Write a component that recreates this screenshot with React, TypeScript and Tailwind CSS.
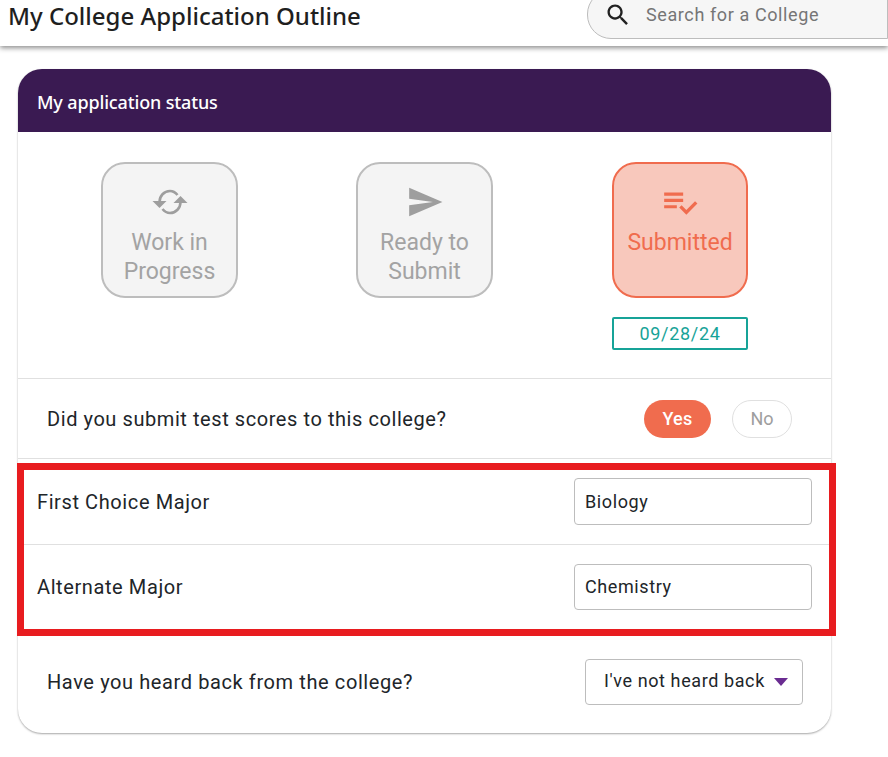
function SyncIcon() {
  return (
    <svg width="36" height="28" viewBox="0 0 36 28" fill="none" className="text-[#9e9e9e]">
      <path d="M7.500 14C7.500 8 12 3 18 3C21 3 23.500 4.500 25.500 7" stroke="currentColor" strokeWidth="2.600" />
      <path d="M28.500 14C28.500 20 24 25 18 25C15 25 12.500 23.500 10.500 21" stroke="currentColor" strokeWidth="2.600" />
      <path d="M0.500 13H14.500L7.500 20Z" fill="currentColor" />
      <path d="M21.500 15H35.500L28.500 8Z" fill="currentColor" />
    </svg>
  );
}

function SendIcon() {
  return (
    <svg width="38" height="38" viewBox="0 0 24 24" fill="#9e9e9e">
      <path d="M2.010 21L23 12 2.010 3 2 10l15 2-15 2z" />
    </svg>
  );
}

function PlaylistCheckIcon() {
  return (
    <svg width="38" height="38" viewBox="0 0 24 24" fill="#f06c4e">
      <path d="M14 10H2v2h12v-2zm0-4H2v2h12V6zM2 16h8v-2H2v2zm19.500-4.500L23 13l-6.990 7-4.510-4.500L13 14l3.010 3 5.490-5.500z" />
    </svg>
  );
}

function SearchIcon() {
  return (
    <svg width="28" height="28" viewBox="0 0 24 24" fill="#212121">
      <path d="M15.500 14h-.79l-.28-.27C15.410 12.590 16 11.110 16 9.500 16 5.910 13.090 3 9.500 3S3 5.910 3 9.500 5.910 16 9.500 16c1.610 0 3.090-.59 4.230-1.570l.27.28v.79l5 4.990L20.490 19l-4.990-5zm-6 0C7.010 14 5 11.990 5 9.500S7.010 5 9.500 5 14 7.010 14 9.500 11.990 14 9.500 14z" />
    </svg>
  );
}

function StatusTile({ icon, lines, active }: { icon: React.ReactNode; lines: string[]; active?: boolean }) {
  return (
    <div
      className={
        active
          ? "flex h-[136px] w-[136px] flex-col items-center rounded-[24px] border-2 border-[#f06c4e] bg-[#f8c8bc] pt-[13px] text-[23px] leading-[29px] text-[#f06c4e]"
          : "flex h-[136px] w-[137px] flex-col items-center rounded-[24px] border-2 border-[#bdbdbd] bg-[#f4f4f4] pt-[13px] text-[23px] leading-[29px] text-[#a3a3a3]"
      }
    >
      <div className="flex h-[50px] items-center justify-center">{icon}</div>
      <div className="mt-[1px] text-center">
        {lines.map((l) => (
          <div key={l}>{l}</div>
        ))}
      </div>
    </div>
  );
}

export default function App() {
  return (
    <div className="relative h-[757px] w-[888px] overflow-hidden bg-white font-['Roboto',sans-serif] text-[#212529]">
      <header className="flex h-[46px] items-start justify-between bg-white shadow-[0_2px_5px_rgba(0,0,0,0.45)]">
        <h1 className="ml-2 mt-0 font-['Noto_Sans',sans-serif] text-[24px] font-medium leading-[32px] text-[#1f1f1f]">
          My College Application Outline
        </h1>
        <div className="mt-[-10px] flex h-[49px] w-[301px] shrink-0 items-center rounded-l-[24px] border border-[#bdbdbd] bg-[#f6f6f6] pl-[16px]">
          <SearchIcon />
          <span className="ml-[14px] text-[18px] tracking-[0.6px] text-[#757575]">Search for a College</span>
        </div>
      </header>

      <main className="ml-[18px] mt-[23px] w-[813px] overflow-hidden rounded-[24px] bg-white shadow-[0_1px_2px_rgba(0,0,0,0.35)]">
        <div className="flex h-[63px] items-center bg-[#3a1a52] pl-[19px] pt-[4px] font-['Noto_Sans',sans-serif] text-[18px] font-medium tracking-[-0.15px] text-white">
          My application status
        </div>

        <section className="flex h-[247px] border-b border-[#e0e0e0] pl-[83px] pt-[30px]">
          <StatusTile icon={<SyncIcon />} lines={["Work in", "Progress"]} />
          <div className="ml-[118px]">
            <StatusTile icon={<SendIcon />} lines={["Ready to", "Submit"]} />
          </div>
          <div className="ml-[119px] flex flex-col">
            <StatusTile icon={<PlaylistCheckIcon />} lines={["Submitted"]} active />
            <div className="mt-[19px] flex h-[33px] w-[136px] items-center justify-center rounded-[2px] border-2 border-[#17a398] text-[18px] tracking-[0.7px] text-[#17a398]">
              09/28/24
            </div>
          </div>
        </section>

        <section className="flex h-[80px] items-center justify-between border-b border-[#e0e0e0] pl-[29px] pr-[39px] text-[20px]">
          <span className="tracking-[0.57px]">Did you submit test scores to this college?</span>
          <div className="flex items-center gap-[21px] text-[18px] font-medium">
            <span className="flex h-[38px] w-[67px] items-center justify-center rounded-[19px] bg-[#f06c4e] tracking-[0.3px] text-white">Yes</span>
            <span className="flex h-[38px] w-[60px] items-center justify-center rounded-[19px] border border-[#e0e0e0] font-normal text-[#9e9e9e]">No</span>
          </div>
        </section>

        <section className="flex h-[86px] items-center justify-between border-b border-[#e0e0e0] pb-[1px] pl-[19px] pr-[19px] text-[20px]">
          <span className="mt-[2px] tracking-[0.6px]">First Choice Major</span>
          <div className="flex h-[47px] w-[238px] items-center rounded-[4px] border border-[#bdbdbd] pl-[10px] text-[18px] tracking-[0.6px]">Biology</div>
        </section>

        <section className="flex h-[84px] items-center justify-between pb-[1px] pl-[19px] pr-[19px] text-[20px]">
          <span className="tracking-[0.6px]">Alternate Major</span>
          <div className="flex h-[46px] w-[238px] items-center rounded-[4px] border border-[#bdbdbd] pl-[10px] text-[18px] tracking-[0.6px]">Chemistry</div>
        </section>

        <section className="flex h-[104px] items-center justify-between pl-[29px] pr-[28px] pt-[2px] text-[20px]">
          <span className="tracking-[0.6px]">Have you heard back from the college?</span>
          <div className="flex h-[46px] w-[218px] items-center rounded-[4px] border border-[#bdbdbd] pl-[18px] text-[18px] tracking-[0.6px]">
            <span className="mb-[4px]">I've not heard back</span>
            <svg width="16" height="8" viewBox="0 0 16 8" className="ml-[8px]" fill="#6a2c91">
              <path d="M1 0H15L8 8Z" />
            </svg>
          </div>
        </section>
      </main>

      <div className="pointer-events-none absolute left-[17px] top-[463px] h-[173px] w-[819px] border-[7px] border-[#e81c1f]" />
    </div>
  );
}
